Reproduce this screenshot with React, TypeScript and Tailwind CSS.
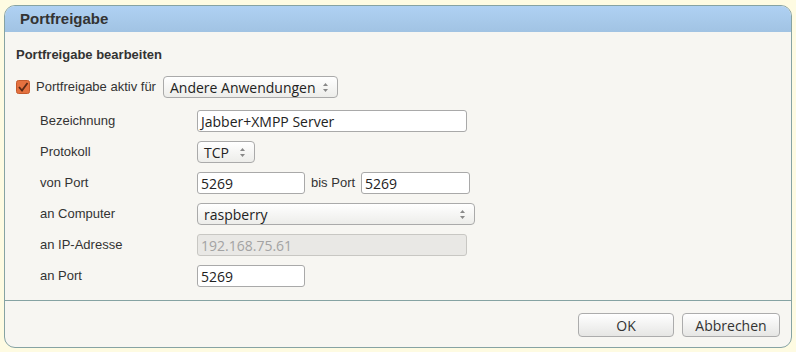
import React from 'react';

const labelFont = { fontFamily: '"Liberation Sans", Arial, sans-serif' };
const fieldFont = { fontFamily: '"Open Sans", "DejaVu Sans", sans-serif' };

function Arrows() {
  return (
    <svg width="7" height="11" viewBox="0 0 7 11" className="shrink-0">
      <path d="M3.5 1 L6 4 L1 4 Z" fill="#888" />
      <path d="M3.5 10 L6 7 L1 7 Z" fill="#888" />
    </svg>
  );
}

function TextField({ value, width, disabled }: { value: string; width: string; disabled?: boolean }) {
  return (
    <div
      className={`${width} h-[22px] flex items-center pl-[3px] rounded-[3px] border text-[14px] ${
        disabled ? 'bg-[#e9e8e5] border-[#c8c7c3] text-[#a3a3a3]' : 'bg-white border-[#a9a9a9] text-[#222]'
      }`}
      style={fieldFont}
    >
      {value}
    </div>
  );
}

function SelectField({ value, width }: { value: string; width: string }) {
  return (
    <div
      className={`${width} h-[22px] flex items-center justify-between pl-[6px] pr-[8px] rounded-[4px] border border-[#aaa] bg-gradient-to-b from-white to-[#ededea] text-[14px] text-[#222]`}
      style={fieldFont}
    >
      <span>{value}</span>
      <Arrows />
    </div>
  );
}

function Row({ label, children }: { label: string; children: React.ReactNode }) {
  return (
    <div className="flex items-center h-[22px]">
      <div className="w-[157px] text-[13px] text-[#333]" style={labelFont}>
        {label}
      </div>
      {children}
    </div>
  );
}

export default function App() {
  return (
    <div className="w-[796px] h-[352px] bg-[#fefbe2] pt-[5px] pl-[4px]">
      <div className="w-[788px] h-[343px] flex flex-col border border-[#86a3a3] rounded-[11px] bg-[#f7f6f2] overflow-hidden">
        <div
          className="h-[26px] shrink-0 flex items-center pl-[15px] bg-gradient-to-b from-[#afd1f3] to-[#a1c3e3] text-[15px] font-bold text-[#333]"
          style={labelFont}
        >
          Portfreigabe
        </div>

        <div className="h-[269px] shrink-0 pl-[11px] pt-[15px] border-b border-[#86a3a3]">
          <div className="text-[13px] leading-[16px] font-bold text-[#333]" style={labelFont}>
            Portfreigabe bearbeiten
          </div>

          <div className="flex items-center h-[22px] mt-[13px]">
            <svg width="14" height="14" viewBox="0 0 14 14" className="shrink-0">
              <rect x="0.5" y="0.5" width="13" height="13" rx="2" fill="#e4713f" stroke="#c55a2c" />
              <path d="M3 7 L6 10.5 L11.5 3" fill="none" stroke="#5a2a16" strokeWidth="1.8" />
            </svg>
            <span className="ml-[6px] text-[13px] text-[#333]" style={labelFont}>
              Portfreigabe aktiv für
            </span>
            <div className="ml-[7px]">
              <SelectField value="Andere Anwendungen" width="w-[175px]" />
            </div>
          </div>

          <div className="pl-[24px] mt-[12px] flex flex-col gap-[9px]">
            <Row label="Bezeichnung">
              <TextField value="Jabber+XMPP Server" width="w-[270px]" />
            </Row>
            <Row label="Protokoll">
              <SelectField value="TCP" width="w-[58px]" />
            </Row>
            <Row label="von Port">
              <TextField value="5269" width="w-[108px]" />
              <span className="mx-[6px] text-[13px] text-[#333]" style={labelFont}>
                bis Port
              </span>
              <TextField value="5269" width="w-[109px]" />
            </Row>
            <Row label="an Computer">
              <SelectField value="raspberry" width="w-[278px]" />
            </Row>
            <Row label="an IP-Adresse">
              <TextField value="192.168.75.61" width="w-[270px]" disabled />
            </Row>
            <Row label="an Port">
              <TextField value="5269" width="w-[108px]" />
            </Row>
          </div>
        </div>

        <div className="flex justify-end gap-[8px] pt-[12px] pr-[11px]">
          {['OK', 'Abbrechen'].map((t) => (
            <button
              key={t}
              className={`${t === 'OK' ? 'w-[96px]' : 'w-[98px]'} h-[24px] rounded-[4px] border border-[#acacac] bg-gradient-to-b from-white to-[#e6e6e4] text-[14px] text-[#333]`}
              style={fieldFont}
            >
              {t}
            </button>
          ))}
        </div>
      </div>
    </div>
  );
}
